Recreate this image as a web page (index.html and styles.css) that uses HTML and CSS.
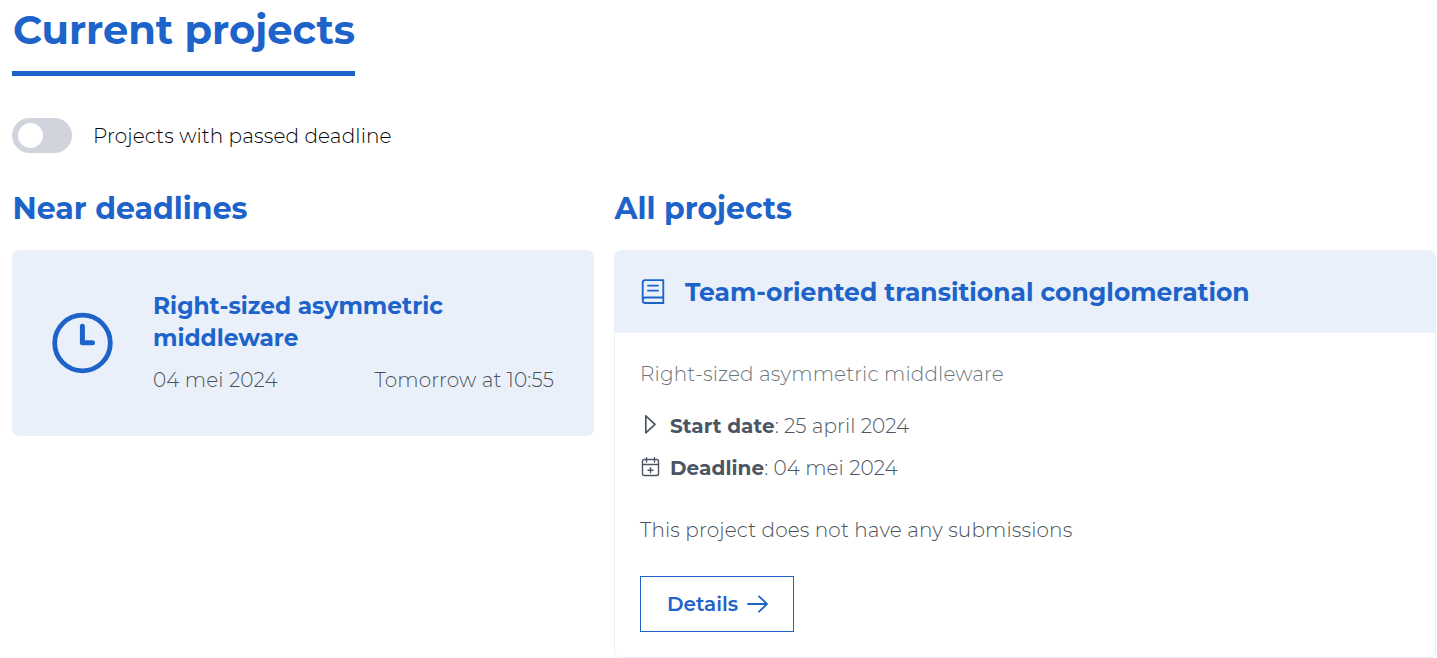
FILE: index.html
```
<!DOCTYPE html>
<html lang="en">
<head>
<meta charset="utf-8">
<title>Projects</title>
<link rel="stylesheet" href="styles.css">
</head>
<body>
<main class="page">
  <h1 class="title">Current projects</h1>
  <div class="filter">
    <span class="switch" role="switch" aria-checked="false"><span class="knob"></span></span>
    <span>Projects with passed deadline</span>
  </div>
  <div class="columns">
    <section>
      <h2 class="heading">Near deadlines</h2>
      <article class="deadline">
        <svg class="clock" viewBox="0 0 62 62" fill="none" stroke="currentColor"><circle cx="31.500" cy="31" r="27.800" stroke-width="4.800"/><path d="M31.400 14.300V30.800H41.500" stroke-width="5" stroke-linecap="round" stroke-linejoin="round"/></svg>
        <div class="deadline-body">
          <h3 class="deadline-title">Right-sized asymmetric<br>middleware</h3>
          <div class="deadline-meta"><span>04 mei 2024</span><span>Tomorrow at 10:55</span></div>
        </div>
      </article>
    </section>
    <section>
      <h2 class="heading">All projects</h2>
      <article class="project">
        <header class="project-head">
          <svg class="book" viewBox="0 0 24 26" fill="none" stroke="currentColor" stroke-width="1.800"><path d="M22.300 18.500V1.200H4.200Q1.700 1.200 1.700 3.700V21.500Q1.700 24 4.200 24H22.300V18.500H4.200Q1.700 18.500 1.700 21.500"/><path d="M7 6.700H17M7 11.700H17" stroke-linecap="round"/></svg>
          <h3 class="project-title">Team-oriented transitional conglomeration</h3>
        </header>
        <div class="project-body">
          <p class="desc">Right-sized asymmetric middleware</p>
          <div class="row"><svg class="icon" viewBox="0 0 20 22" fill="none" stroke="currentColor" stroke-width="1.700" stroke-linejoin="round"><path d="M5.800 0.900V17.800L15 9.300Z"/></svg><span><b>Start date</b>: 25 april 2024</span></div>
          <div class="row"><svg class="icon" viewBox="0 0 20 22" fill="none" stroke="currentColor" stroke-width="1.400" stroke-linecap="round"><rect x="2.500" y="2.500" width="16" height="16" rx="1.800"/><path d="M2.500 7.500H18.500M6.500 0.700V5M14.500 0.700V5M10.500 10.700V15.700M8 13.200H13"/></svg><span><b>Deadline</b>: 04 mei 2024</span></div>
          <p class="empty">This project does not have any submissions</p>
          <a class="button">Details<svg class="arrow" viewBox="0 0 22 18" fill="none" stroke="currentColor" stroke-width="1.800" stroke-linecap="round" stroke-linejoin="round"><path d="M1 9H20M12 1.300L20 9L12 16.700"/></svg></a>
        </div>
      </article>
    </section>
  </div>
</main>
</body>
</html>
```
FILE: styles.css
```
* { box-sizing: border-box; margin: 0; padding: 0; }
body { background: #fff; color: #495057; font: 300 20px/30px Montserrat, Inter, sans-serif; letter-spacing: 0.14px; white-space: nowrap; }
.page { padding: 0 1px 0 12px; }
.title { display: inline-block; width: 343px; height: 76px; padding-left: 1px; border-bottom: 5px solid #1d63c9; color: #1d63c9; font-size: 40px; font-weight: 700; line-height: 60px; letter-spacing: 0; }
.filter { display: flex; align-items: center; gap: 21px; height: 35px; margin-top: 42px; color: #000; }
.switch { width: 60px; height: 35px; padding: 5px 6px; border-radius: 18px; background: #d1d4dc; }
.knob { display: block; width: 25px; height: 25px; border-radius: 50%; background: #fff; }
.columns { display: grid; grid-template-columns: 582px 822px; gap: 20px; align-items: start; margin-top: 37px; }
.heading { height: 60px; padding-left: 0.5px; color: #1d63c9; font-size: 30px; font-weight: 700; line-height: 38px; letter-spacing: 0; }
.deadline { display: flex; align-items: center; gap: 40px; height: 186px; padding: 0 40px 0 39px; border-radius: 7px; background: #e9f0fa; }
.clock { flex: none; width: 62px; height: 62px; color: #1d63c9; }
.deadline-body { flex: 1; padding-bottom: 2px; }
.deadline-title { color: #1d63c9; font-size: 23.3px; font-weight: 700; line-height: 32px; letter-spacing: 0; }
.deadline-meta { display: flex; justify-content: space-between; margin-top: 11px; }
.project { height: 408px; border: 1px solid #e9f0fa; border-radius: 7px; overflow: hidden; }
.project-head { display: flex; align-items: center; gap: 20px; height: 82px; padding-left: 26px; background: #e9f0fa; color: #1d63c9; }
.book { width: 24px; height: 26px; }
.project-title { font-size: 25px; font-weight: 700; letter-spacing: 0; }
.project-body { padding: 26px 25px; }
.desc { margin-bottom: 16px; color: #6c757d; }
.row { display: flex; align-items: center; gap: 10px; height: 42px; color: #4b5563; letter-spacing: 0.08px; }
.icon { width: 20px; height: 22px; }
.row b { font-weight: 700; }
.empty { margin: 26px 0 31px; }
.button { display: flex; align-items: center; gap: 9px; width: 154px; height: 56px; padding-left: 26px; border: 1px solid #1d63c9; color: #1d63c9; font-weight: 600; letter-spacing: 0; }
.arrow { width: 22px; height: 18px; }
```
